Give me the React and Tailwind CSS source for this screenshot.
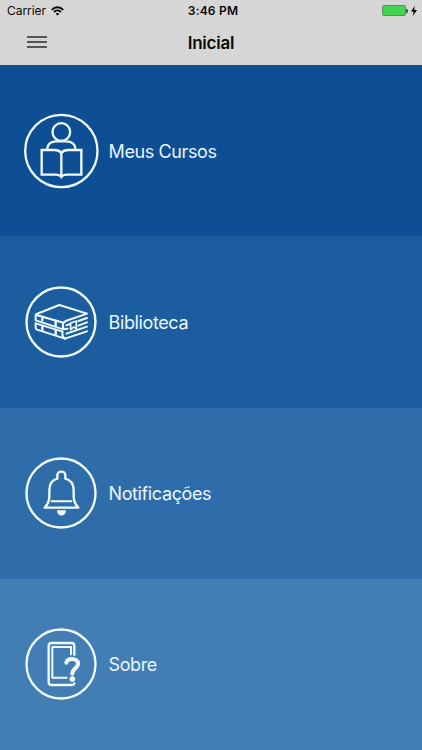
import React from 'react';

const CoursesIcon = () => (
    <svg className="h-[90px] w-[90px] shrink-0" viewBox="0 3 270 270" fill="none" stroke="#f0fbff" strokeWidth="7">
        <circle cx="139" cy="138" r="108.5" />
        <circle cx="139" cy="81" r="26.5" />
        <path d="M97 134 C97 116 110 109 124 109 H154 C168 109 181 116 181 134" />
        <path d="M139 144 C134 137 128 135 119 135 H80 V209 H123 C130 209 136 211 139 216 C142 211 148 209 155 209 H199 V135 H159 C150 135 144 137 139 144 Z" />
        <path d="M139 143 V214" />
    </svg>
);

const LibraryIcon = () => (
    <svg className="h-[90px] w-[90px] shrink-0" viewBox="0 0 270 270" fill="none" stroke="#f0fbff" strokeWidth="6" strokeLinejoin="round" strokeLinecap="round">
        <circle cx="138" cy="135" r="103.5" strokeWidth="7" />
        {/* Upper book */}
        <path d="M145 157 L62 130 V115 C62 113 63 112 65 111 L133 84 L216 110 L152 132 C142 136 141 150 148 157 L158 155" />
        <path d="M64 114 L145 137" />
        <path d="M154 145 L165 141" />
        <path d="M190 132 L216 123" />
        <path d="M190 146 L216 136" />
        <path d="M167 138 L184 132 V155 L176 150 L167 158 Z" strokeWidth="5" />
        {/* Lower book */}
        <path d="M62 139 V153 C62 155 63 157 66 158 L150 185 L216 163" />
        <path d="M62 139 L143 164 C141 171 142 179 150 185" />
        <path d="M154 170 L216 149" />
        <path d="M82 119 V130 M82 147 V160 M122 131 V145 M122 159 V174" strokeWidth="7" />
    </svg>
);

const BellIcon = () => (
    <svg className="h-[90px] w-[90px] shrink-0" viewBox="0 0 270 270" fill="none" stroke="#f0fbff" strokeWidth="7" strokeLinejoin="round" strokeLinecap="round">
        <circle cx="138" cy="135" r="103.5" />
        <path d="M89 179 C99 169 103 161 103 145 V126 C103 108 112 96 127 92 V82 C127 67 151 67 151 82 V92 C167 96 176 108 176 126 V145 C176 161 180 169 190 179 Z" />
        <path d="M110 160 H169" strokeWidth="6" />
        <path d="M126 187 H153 C153 208 126 208 126 187 Z" fill="#f0fbff" stroke="none" />
    </svg>
);

const AboutIcon = () => (
    <svg className="h-[90px] w-[90px] shrink-0" viewBox="0 0 270 270" fill="none" stroke="#f0fbff" strokeWidth="7" strokeLinejoin="round" strokeLinecap="round">
        <circle cx="138" cy="135" r="103.5" />
        <path d="M178 107 V80 C178 75 175 72 170 72 H109 C104 72 101 75 101 80 V189 C101 194 104 198 109 198 H170 C175 198 177 196 178 193" />
        <path d="M168 106 V84 H112 V176 H155" strokeWidth="6" />
        <path d="M154 131 C156 116 188 116 189 133 C190 148 172 147 172 164" strokeWidth="12" />
        <circle cx="172" cy="180" r="8.5" fill="#f0fbff" stroke="none" />
    </svg>
);

const menuItems = [
    { label: 'Meus Cursos', icon: CoursesIcon, bg: 'bg-[#0d4e95]' },
    { label: 'Biblioteca', icon: LibraryIcon, bg: 'bg-[#1c5d9f]' },
    { label: 'Notificações', icon: BellIcon, bg: 'bg-[#2e6da9]' },
    { label: 'Sobre', icon: AboutIcon, bg: 'bg-[#427db3]' },
];

const StatusBar = () => (
    <div className="grid h-[22px] grid-cols-3 items-center pr-[5px] pl-[7px] text-[12px] leading-[22px]">
        <div className="flex items-center gap-[5px]">
            <span className="tracking-[-0.05px]">Carrier</span>
            <svg className="-mt-px h-[10px] w-[13px]" viewBox="0 0 13 10" fill="none" stroke="#000" strokeWidth="1.8">
                <path d="M0.8 3.8 C4 0.4 9 0.4 12.2 3.8" />
                <path d="M3 6 C5 4 8 4 10 6" />
                <path d="M6.5 9.6 L4.6 7.7 C5.7 6.7 7.3 6.7 8.4 7.7 Z" fill="#000" stroke="none" />
            </svg>
        </div>
        <span className="pl-[2px] text-center font-semibold tracking-[0.2px]">3:46 PM</span>
        <div className="-mt-px flex items-center justify-end">
            <div className="h-[11px] w-[24px] rounded-[2px] border border-[#55935d] bg-[#43d551]"></div>
            <div className="h-[4px] w-[2px] rounded-r-[1px] bg-[#4b5a4d]"></div>
            <svg className="ml-[3px] h-[10px] w-[6px]" viewBox="0 0 6 10">
                <path d="M3.8 0 L0 5.6 H2.6 L1.7 10 L6 4.1 H3.3 Z" fill="#000" />
            </svg>
        </div>
    </div>
);

const App = () => {
    return (
        <div className="flex h-[750px] w-[422px] flex-col overflow-hidden font-['Inter',sans-serif]">
            {/* Header */}
            <header className="h-[65px] bg-[#d6d6d6] text-[#080808]">
                <StatusBar />
                <div className="grid h-[43px] grid-cols-3 items-center">
                    <button className="-mt-[3px] ml-[27px] flex w-[20px] flex-col gap-[3px]" aria-label="Menu">
                        <span className="h-[2px] w-full bg-[#555557]"></span>
                        <span className="h-[2px] w-full bg-[#555557]"></span>
                        <span className="h-[2px] w-full bg-[#555557]"></span>
                    </button>
                    <h1 className="text-center text-[17px] font-semibold tracking-[-0.2px]">Inicial</h1>
                </div>
            </header>

            {/* Menu */}
            <nav className="flex flex-1 flex-col">
                {menuItems.map(({ label, icon: Icon, bg }) => (
                    <a key={label} className={`flex flex-1 items-center pl-[15px] ${bg}`}>
                        <Icon />
                        <span className="ml-[3.5px] pt-px text-[18px] tracking-[-0.38px] text-[#eaf6ff]">{label}</span>
                    </a>
                ))}
            </nav>
        </div>
    );
};

export default App;
